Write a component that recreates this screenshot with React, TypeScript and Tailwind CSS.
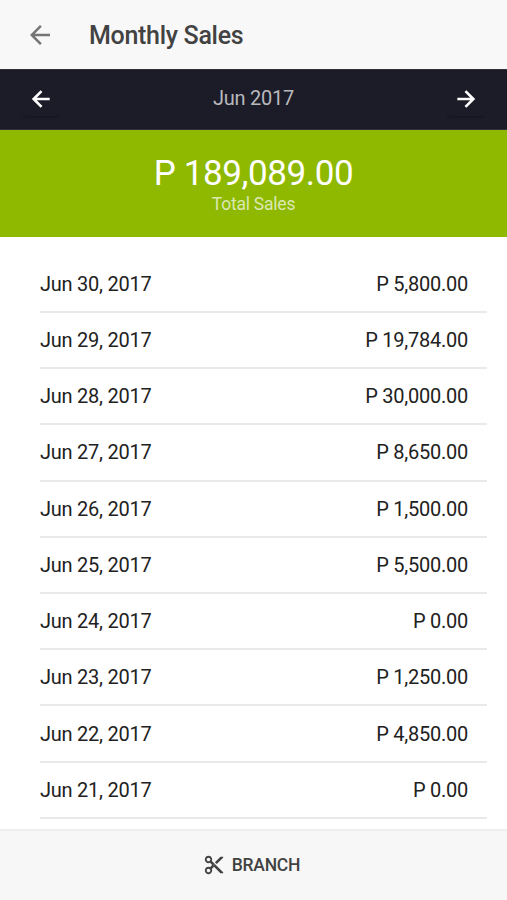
import { MdArrowBack, MdContentCut } from "react-icons/md";

const sales = [
  ["Jun 30, 2017", "P 5,800.00"],
  ["Jun 29, 2017", "P 19,784.00"],
  ["Jun 28, 2017", "P 30,000.00"],
  ["Jun 27, 2017", "P 8,650.00"],
  ["Jun 26, 2017", "P 1,500.00"],
  ["Jun 25, 2017", "P 5,500.00"],
  ["Jun 24, 2017", "P 0.00"],
  ["Jun 23, 2017", "P 1,250.00"],
  ["Jun 22, 2017", "P 4,850.00"],
  ["Jun 21, 2017", "P 0.00"],
];

function Arrow({ className }: { className: string }) {
  return (
    <svg viewBox="0 0 24 24" className={className} fill="none" stroke="currentColor" strokeWidth="2.4">
      <path d="M20 12H5M12.5 4.7 5.2 12l7.3 7.3" />
    </svg>
  );
}

export default function App() {
  return (
    <div className="flex h-[900px] w-full flex-col overflow-hidden bg-white font-['Roboto',sans-serif]">
      <header className="flex h-[69px] shrink-0 items-center bg-[#f8f8f8] pl-[25px] pt-[2px]">
        <button aria-label="Back" className="pb-px text-[#757575]">
          <MdArrowBack className="h-[30px] w-[30px]" />
        </button>
        <h1 className="ml-[34px] text-[25px] font-medium leading-[32px] tracking-[-0.3px] text-[#424242]">Monthly Sales</h1>
      </header>

      <nav className="flex h-[61px] shrink-0 items-center justify-between border-y border-[#302f3a] bg-[#1c1b28] px-[22px] pb-[2px] text-white">
        <button aria-label="Previous month" className="flex h-[34px] w-[38px] items-center justify-center rounded-sm shadow-[0_2px_2px_-1px_#15141e]">
          <Arrow className="h-[26px] w-[26px]" />
        </button>
        <span className="pb-px text-[20px] leading-6 tracking-[-0.25px] text-[#b9b9bd]">Jun 2017</span>
        <button aria-label="Next month" className="flex h-[34px] w-[38px] items-center justify-center rounded-sm shadow-[0_2px_2px_-1px_#15141e]">
          <Arrow className="h-[26px] w-[26px] rotate-180" />
        </button>
      </nav>

      <section className="flex h-[107px] shrink-0 flex-col items-center bg-[#8fb900] pt-[24px]">
        <div className="text-[35px] leading-[40px] tracking-[-0.4px] text-white">P 189,089.00</div>
        <div className="text-[17.5px] leading-[20px] tracking-[-0.22px] text-[#dbe8b3]">Total Sales</div>
      </section>

      <main className="min-h-0 flex-1 overflow-hidden pl-10 pr-5 pt-[19.6px]">
        <ul>
          {sales.map(([date, amount]) => (
            <li
              key={date}
              className="flex h-[56.24px] items-center justify-between border-b-2 border-[#e9e9e9] pr-[19px] text-[20px] leading-6 tracking-[-0.25px] text-[#212121]"
            >
              <span>{date}</span>
              <span>{amount}</span>
            </li>
          ))}
        </ul>
      </main>

      <footer className="flex h-[71px] shrink-0 items-center justify-center gap-[7px] border-t-2 border-[#eeeeee] bg-[#f7f7f7] pb-px pr-[4px] text-[#424242]">
        <MdContentCut className="h-[22px] w-[22px]" />
        <span className="text-[17.5px] font-medium leading-6 tracking-[-0.25px]">BRANCH</span>
      </footer>
    </div>
  );
}
